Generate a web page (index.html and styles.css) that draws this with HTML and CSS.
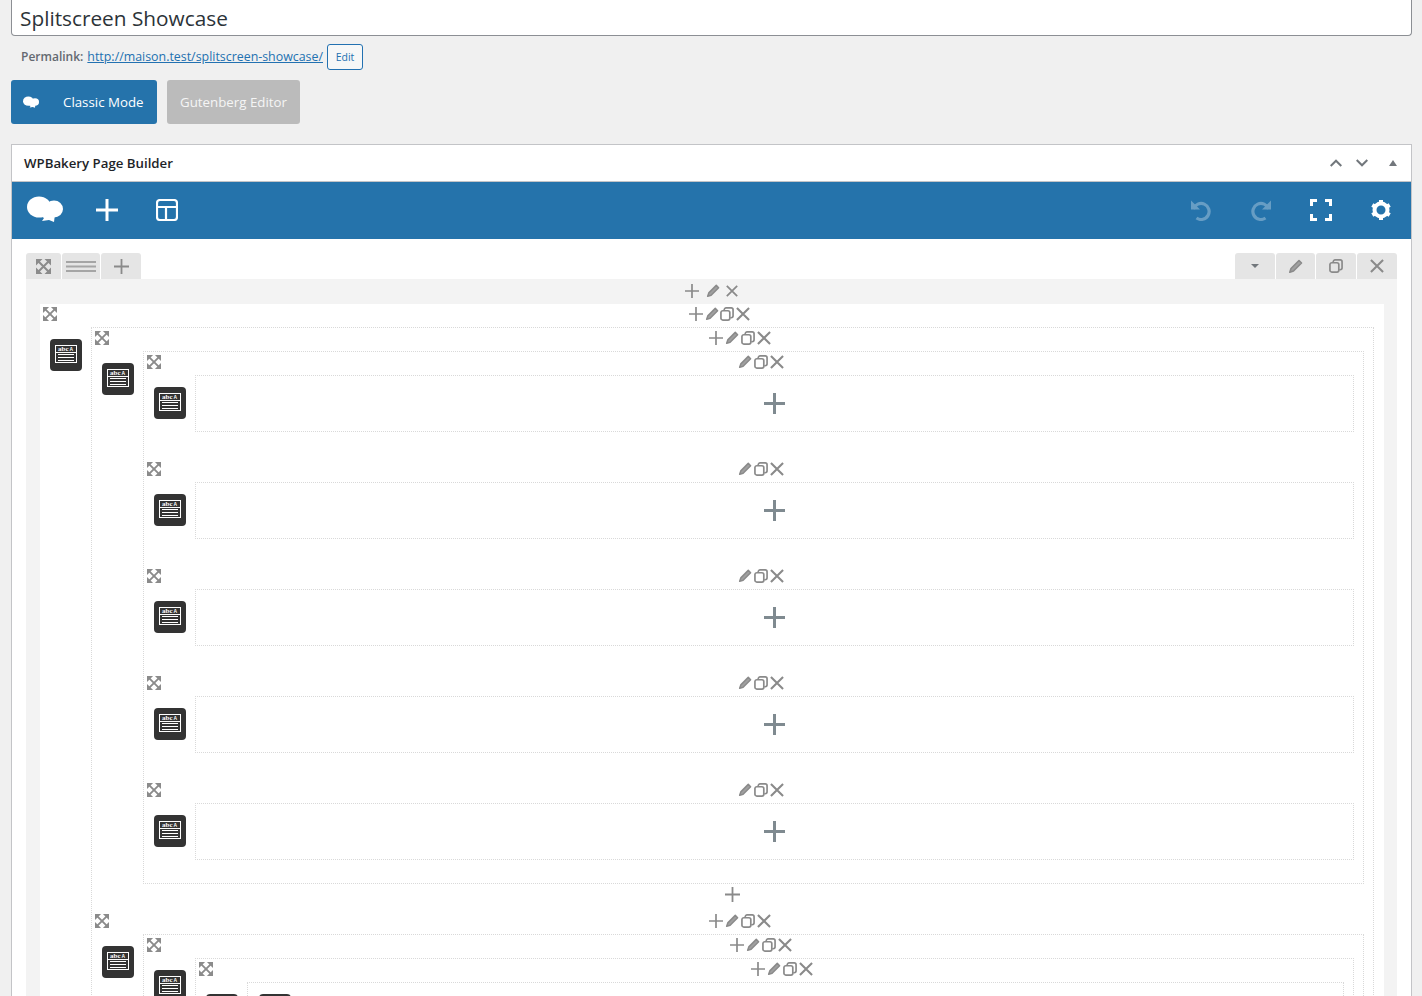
FILE: index.html
```html
<!DOCTYPE html>
<html lang="en">
<head>
<meta charset="utf-8">
<title>Splitscreen Showcase</title>
<link rel="stylesheet" href="styles.css">
</head>
<body>
<svg class="defs" aria-hidden="true">
  <symbol id="expand" viewBox="0 0 15 15"><path d="M0 0h6.500L0 6.500zM15 0v6.500L8.500 0zM0 15V8.500L6.500 15zM15 15H8.500L15 8.500z" fill="#8b8b8b"/><path d="M2.500 2.500l10 10M12.500 2.500l-10 10" stroke="#8b8b8b" stroke-width="2"/></symbol>
  <symbol id="plus" viewBox="0 0 15 15"><path d="M0 7.500h15M7.500 0v15" stroke="currentColor" stroke-width="1.800" fill="none"/></symbol>
  <symbol id="plus-bold" viewBox="0 0 21 21"><path d="M0 10.500h21M10.500 0v21" stroke="currentColor" stroke-width="3" fill="none"/></symbol>
  <symbol id="pencil" viewBox="0 0 15 15"><path d="M11 1.500l2.500 2.500-8 8-3.700 1.200 1.200-3.700z" fill="#a0a0a0" stroke="currentColor" stroke-width="1.600" stroke-linejoin="round"/></symbol>
  <symbol id="copy" viewBox="0 0 15 15"><rect x="1" y="4" width="9.500" height="10" rx="2" fill="none" stroke="currentColor" stroke-width="1.800"/><path d="M4.500 3.400V3a2 2 0 0 1 2-2H12a2 2 0 0 1 2 2v6.500a2 2 0 0 1-2 2h-1" fill="none" stroke="currentColor" stroke-width="1.800"/></symbol>
  <symbol id="close" viewBox="0 0 15 15"><path d="M1 1l13 13M14 1L1 14" stroke="currentColor" stroke-width="2.200" fill="none"/></symbol>
  <symbol id="cloud" viewBox="0 0 36 28"><ellipse cx="12" cy="11" rx="12" ry="10.500" fill="#fff"/><ellipse cx="27" cy="13" rx="9" ry="8.500" fill="#fff"/><path d="M10 18h18l-1 8-5-2-7 1 2-3z" fill="#fff"/></symbol>
</svg>

<div class="title">Splitscreen Showcase</div>

<div class="permalink">
  <strong>Permalink:</strong>
  <a href="#">http://maison.test/splitscreen-showcase/</a>
  <span class="edit">Edit</span>
</div>

<div class="modes">
  <span class="mode mode-classic"><svg class="mode-logo"><use href="#cloud"/></svg>Classic Mode</span>
  <span class="mode mode-gutenberg">Gutenberg Editor</span>
</div>

<section class="panel">
  <header class="panel-head">
    <h2>WPBakery Page Builder</h2>
    <div class="panel-tools">
      <svg class="chev" viewBox="0 0 12 8"><path d="M.7 7l5.300-5.300L11.300 7" fill="none" stroke="#72777c" stroke-width="2"/></svg>
      <svg class="chev" viewBox="0 0 12 8"><path d="M.7 1L6 6.300 11.300 1" fill="none" stroke="#72777c" stroke-width="2"/></svg>
      <span class="tri"></span>
    </div>
  </header>

  <nav class="toolbar">
    <div class="tb-group tb-left">
      <svg class="tb-logo"><use href="#cloud"/></svg>
      <svg class="tb-icon" viewBox="0 0 22 22"><path d="M0 11h22M11 0v22" stroke="#fff" stroke-width="3"/></svg>
      <svg class="tb-icon" viewBox="0 0 22 22"><rect x="1" y="1" width="20" height="20" rx="3" fill="none" stroke="#fff" stroke-width="2.200"/><path d="M1 8h20M10 8v13" stroke="#fff" stroke-width="2.200"/></svg>
    </div>
    <div class="tb-group tb-right">
      <svg class="tb-icon tb-dim" viewBox="0 0 22 22"><path d="M3.500 10a8 8 0 1 1 3 9" fill="none" stroke="#fff" stroke-width="3.200"/><path d="M1 1.500v9h9z" fill="#fff"/></svg>
      <svg class="tb-icon tb-dim" viewBox="0 0 22 22"><path d="M18.500 10a8 8 0 1 0-3 9" fill="none" stroke="#fff" stroke-width="3.200"/><path d="M21 1.500v9h-9z" fill="#fff"/></svg>
      <svg class="tb-icon" viewBox="0 0 22 22"><path d="M1.500 7V1.500H7M15 1.500h5.500V7M20.500 15v5.500H15M7 20.500H1.500V15" fill="none" stroke="#fff" stroke-width="3"/></svg>
      <svg class="tb-icon" viewBox="0 0 22 22"><circle cx="11" cy="11" r="6.500" fill="none" stroke="#fff" stroke-width="4"/><path d="M11 1v3M11 18v3M2.300 6l2.600 1.500M17.100 14.500l2.600 1.500M2.300 16l2.600-1.500M17.100 7.500L19.700 6" stroke="#fff" stroke-width="4"/></svg>
    </div>
  </nav>

  <div class="canvas">
    <div class="row-controls">
      <div class="ctl-group">
        <span class="ctl ctl-a"><svg class="i15"><use href="#expand"/></svg></span>
        <span class="ctl ctl-m"><svg class="lines" viewBox="0 0 30 13"><path d="M0 2h30M0 6.500h30M0 11h30" stroke="#a5a5a5" stroke-width="2"/></svg></span>
        <span class="ctl"><svg class="i15"><use href="#plus"/></svg></span>
      </div>
      <div class="ctl-group">
        <span class="ctl"><span class="caret"></span></span>
        <span class="ctl ctl-b"><svg class="i15"><use href="#pencil"/></svg></span>
        <span class="ctl"><svg class="i14"><use href="#copy"/></svg></span>
        <span class="ctl"><svg class="i14"><use href="#close"/></svg></span>
      </div>
    </div>

    <div class="row-body">
      <div class="top-tools">
        <svg class="i14"><use href="#plus"/></svg>
        <svg class="i14"><use href="#pencil"/></svg>
        <svg class="i12"><use href="#close"/></svg>
      </div>

      <div class="level1">
        <div class="head">
          <svg class="expand"><use href="#expand"/></svg>
          <div class="tools">
            <svg><use href="#plus"/></svg><svg><use href="#pencil"/></svg><svg><use href="#copy"/></svg><svg><use href="#close"/></svg>
          </div>
        </div>
        <div class="row">
          <div class="block"><div class="doc"><div class="doc-head"><span>abc</span><small>A</small></div><div class="doc-lines"></div></div></div>
          <div class="box box-2">
            <div class="head">
              <svg class="expand"><use href="#expand"/></svg>
              <div class="tools">
                <svg><use href="#plus"/></svg><svg><use href="#pencil"/></svg><svg><use href="#copy"/></svg><svg><use href="#close"/></svg>
              </div>
            </div>
            <div class="row">
              <div class="block"><div class="doc"><div class="doc-head"><span>abc</span><small>A</small></div><div class="doc-lines"></div></div></div>
              <div class="box box-3 stack">
                <div class="entry">
                  <div class="head"><svg class="expand"><use href="#expand"/></svg><div class="tools"><svg><use href="#pencil"/></svg><svg><use href="#copy"/></svg><svg><use href="#close"/></svg></div></div>
                  <div class="row"><div class="block"><div class="doc"><div class="doc-head"><span>abc</span><small>A</small></div><div class="doc-lines"></div></div></div><div class="leaf"><svg class="leaf-plus"><use href="#plus-bold"/></svg></div></div>
                </div>
                <div class="entry">
                  <div class="head"><svg class="expand"><use href="#expand"/></svg><div class="tools"><svg><use href="#pencil"/></svg><svg><use href="#copy"/></svg><svg><use href="#close"/></svg></div></div>
                  <div class="row"><div class="block"><div class="doc"><div class="doc-head"><span>abc</span><small>A</small></div><div class="doc-lines"></div></div></div><div class="leaf"><svg class="leaf-plus"><use href="#plus-bold"/></svg></div></div>
                </div>
                <div class="entry">
                  <div class="head"><svg class="expand"><use href="#expand"/></svg><div class="tools"><svg><use href="#pencil"/></svg><svg><use href="#copy"/></svg><svg><use href="#close"/></svg></div></div>
                  <div class="row"><div class="block"><div class="doc"><div class="doc-head"><span>abc</span><small>A</small></div><div class="doc-lines"></div></div></div><div class="leaf"><svg class="leaf-plus"><use href="#plus-bold"/></svg></div></div>
                </div>
                <div class="entry">
                  <div class="head"><svg class="expand"><use href="#expand"/></svg><div class="tools"><svg><use href="#pencil"/></svg><svg><use href="#copy"/></svg><svg><use href="#close"/></svg></div></div>
                  <div class="row"><div class="block"><div class="doc"><div class="doc-head"><span>abc</span><small>A</small></div><div class="doc-lines"></div></div></div><div class="leaf"><svg class="leaf-plus"><use href="#plus-bold"/></svg></div></div>
                </div>
                <div class="entry">
                  <div class="head"><svg class="expand"><use href="#expand"/></svg><div class="tools"><svg><use href="#pencil"/></svg><svg><use href="#copy"/></svg><svg><use href="#close"/></svg></div></div>
                  <div class="row"><div class="block"><div class="doc"><div class="doc-head"><span>abc</span><small>A</small></div><div class="doc-lines"></div></div></div><div class="leaf"><svg class="leaf-plus"><use href="#plus-bold"/></svg></div></div>
                </div>
              </div>
            </div>
            <div class="add-row"><svg class="i15"><use href="#plus"/></svg></div>

            <div class="head">
              <svg class="expand"><use href="#expand"/></svg>
              <div class="tools">
                <svg><use href="#plus"/></svg><svg><use href="#pencil"/></svg><svg><use href="#copy"/></svg><svg><use href="#close"/></svg>
              </div>
            </div>
            <div class="row">
              <div class="block"><div class="doc"><div class="doc-head"><span>abc</span><small>A</small></div><div class="doc-lines"></div></div></div>
              <div class="box box-3">
                <div class="head">
                  <svg class="expand"><use href="#expand"/></svg>
                  <div class="tools">
                    <svg><use href="#plus"/></svg><svg><use href="#pencil"/></svg><svg><use href="#copy"/></svg><svg><use href="#close"/></svg>
                  </div>
                </div>
                <div class="row">
                  <div class="block"><div class="doc"><div class="doc-head"><span>abc</span><small>A</small></div><div class="doc-lines"></div></div></div>
                  <div class="box box-4">
                    <div class="head">
                      <svg class="expand"><use href="#expand"/></svg>
                      <div class="tools">
                        <svg><use href="#plus"/></svg><svg><use href="#pencil"/></svg><svg><use href="#copy"/></svg><svg><use href="#close"/></svg>
                      </div>
                    </div>
                    <div class="row">
                      <div class="block"><div class="doc"><div class="doc-head"><span>abc</span><small>A</small></div><div class="doc-lines"></div></div></div>
                      <div class="box box-5">
                        <div class="block"><div class="doc"><div class="doc-head"><span>abc</span><small>A</small></div><div class="doc-lines"></div></div></div>
                      </div>
                    </div>
                  </div>
                </div>
              </div>
            </div>
          </div>
        </div>
      </div>
    </div>
  </div>
</section>
</body>
</html>
```

FILE: styles.css
```css
* { box-sizing: border-box; }
html, body { margin: 0; height: 996px; overflow: hidden; }
body {
  background: #f0f0f0;
  padding: 0 10px 0 11px;
  font-family: "Open Sans", "Liberation Sans", sans-serif;
  font-size: 13px;
  color: #3c434a;
}
svg { display: block; flex: none; }
.defs { position: absolute; width: 0; height: 0; }

.title {
  height: 36px;
  background: #fff;
  border: 1px solid #8c8f94;
  border-top: 0;
  border-radius: 0 0 4px 4px;
  padding-left: 8px;
  font-size: 20.800px;
  line-height: 36px;
  color: #2c3338;
}

.permalink {
  display: flex;
  align-items: center;
  height: 26px;
  margin-top: 8px;
  padding: 0 0 2px 10px;
  font-size: 12.400px;
  color: #646970;
}
.permalink strong { font-weight: 600; font-size: 12px; margin-right: 4px; }
.permalink a { color: #2271b1; }
.edit {
  margin: 0 0 -2px 4px;
  width: 36px;
  height: 26px;
  line-height: 24px;
  border: 1px solid #2271b1;
  border-radius: 3px;
  background: #f6f7f7;
  color: #2271b1;
  font-size: 10.500px;
  text-align: center;
}

.modes { display: flex; gap: 10px; margin-top: 10px; }
.mode {
  display: flex;
  align-items: center;
  height: 44px;
  border-radius: 3px;
  color: #fff;
  font-size: 13.300px;
}
.mode-classic { width: 146px; background: #2573ab; padding-left: 12px; }
.mode-logo { width: 16px; height: 13px; margin-right: 24px; }
.mode-gutenberg { width: 133px; background: #bbb; padding-left: 13px; color: #f5f5f5; }

.panel {
  margin-top: 20px;
  background: #fff;
  border: 1px solid #c3c4c7;
}
.panel-head {
  display: flex;
  align-items: center;
  justify-content: space-between;
  height: 37px;
  padding: 0 14px 0 12px;
  border-bottom: 1px solid #c3c4c7;
}
.panel-head h2 { margin: 0; font-size: 13.250px; font-weight: 600; color: #1d2327; }
.panel-tools { display: flex; align-items: center; }
.chev { width: 12px; height: 8px; margin-right: 14px; }
.tri {
  margin-left: 7px;
  border: 4px solid transparent;
  border-top: 0;
  border-bottom: 6px solid #72777c;
}

.toolbar {
  display: flex;
  justify-content: space-between;
  align-items: center;
  height: 57px;
  background: #2573ab;
  padding: 0 19px 2px 15px;
}
.tb-group { display: flex; align-items: center; }
.tb-logo { width: 36px; height: 28px; margin: 0 33px 0 0; }
.tb-left .tb-icon + .tb-icon { margin-left: 38px; }
.tb-icon { width: 22px; height: 22px; }
.tb-right .tb-icon + .tb-icon { margin-left: 38px; }
.tb-dim { opacity: .3; }

.canvas { padding: 14px 14px 0; }
.row-controls { display: flex; justify-content: space-between; height: 26px; }
.ctl-group { display: flex; gap: 1px; }
.ctl {
  display: flex;
  align-items: center;
  justify-content: center;
  width: 40px;
  height: 26px;
  background: #e5e5e5;
  border-radius: 3px 3px 0 0;
  color: #8a8a8a;
}
.ctl-a { width: 35px; }
.ctl-m { width: 38px; }
.ctl-b { width: 39px; }
.ctl .i15 { margin: 0; }
.lines { width: 30px; height: 13px; }
.caret { border: 4px solid transparent; border-top: 4px solid #72777c; border-bottom: 0; }
.i12 { width: 12px; height: 12px; color: #8a8a8a; }
.i14 { width: 14px; height: 14px; color: #8a8a8a; }
.i15 { width: 15px; height: 15px; color: #8a8a8a; margin-right: 1px; }

.row-body { background: #f3f3f3; padding: 0 13px 0 14px; }
.top-tools {
  display: flex;
  align-items: center;
  justify-content: center;
  gap: 6.500px;
  height: 25px;
  padding: 0 1px 1px 0;
}

.level1 { background: #fff; }
.head { display: flex; align-items: flex-start; height: 23px; padding-left: 3px; }
.expand { width: 14px; height: 14px; margin: 3px 1px 0 0; }
.tools {
  flex: 1;
  display: flex;
  justify-content: center;
  gap: 1.700px;
  padding: 3px 3px 0 0;
  color: #8a8a8a;
}
.tools svg { width: 14px; height: 14px; }

.row { display: flex; padding: 0 10px 0 10px; gap: 9px; }
.row > .block { margin-top: 12px; }
.block {
  flex: none;
  display: flex;
  width: 32px;
  height: 32px;
  padding: 6px 5px 8px;
  background: #333;
  border-radius: 4px;
}
.doc { flex: 1; display: flex; flex-direction: column; border: 1px solid #fff; }
.doc-head {
  display: flex;
  justify-content: space-between;
  align-items: center;
  height: 7px;
  padding: 0 3px 0 2px;
  border-bottom: 1px solid #fff;
  color: #fff;
  font: bold 7px/6px "Liberation Serif", serif;
  opacity: .99;
}
.doc-head small { font: bold 5px/6px "Liberation Sans", sans-serif; }
.doc-lines {
  flex: 1;
  margin: 1px 2px 0;
  background: repeating-linear-gradient(#fff 0 1px, transparent 1px 3px);
}

.box { flex: 1; min-width: 0; border: 1px dotted #d9d9d9; }
.box > .row, .entry > .row { padding-right: 9px; }
.stack { display: flex; flex-direction: column; gap: 27px; padding-bottom: 23px; }
.leaf {
  flex: 1;
  height: 57px;
  border: 1px dotted #d9d9d9;
  display: flex;
  align-items: center;
  justify-content: center;
}
.leaf-plus { width: 21px; height: 21px; color: #7f8a90; }
.add-row { display: flex; justify-content: center; height: 27px; padding: 3px 0 0 1px; }
.box-5 { padding: 11px 0 0 11px; height: 60px; }
```
